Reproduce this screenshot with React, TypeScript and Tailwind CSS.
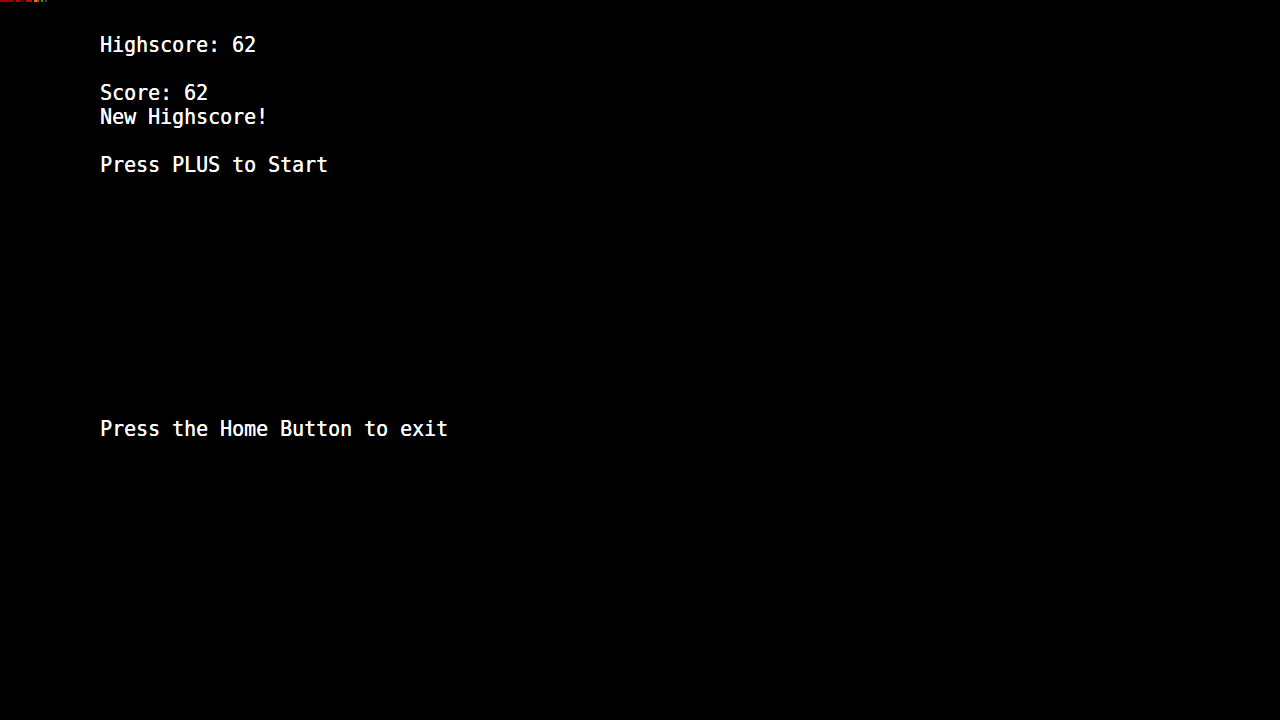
const lines = [
  "Highscore: 62",
  "",
  "Score: 62",
  "New Highscore!",
  "",
  "Press PLUS to Start",
  "",
  "",
  "",
  "",
  "",
  "",
  "",
  "",
  "",
  "",
  "Press the Home Button to exit",
];

const App = () => {
  return (
    <div className="relative w-[1280px] h-[720px] bg-black overflow-hidden">
      {/* debug strip in the corner */}
      <div className="absolute top-0 left-0 flex h-[2px]">
        <div className="w-[14px] bg-[#a00000]" />
        <div className="w-[2px] bg-black" />
        <div className="w-[4px] bg-[#c00000]" />
        <div className="w-[4px] bg-[#600000]" />
        <div className="w-[2px] bg-black" />
        <div className="w-[6px] bg-[#b01010]" />
        <div className="w-[2px] bg-black" />
        <div className="w-[3px] bg-[#d08020]" />
        <div className="w-[2px] bg-[#c04020]" />
        <div className="w-[2px] bg-black" />
        <div className="w-[2px] bg-[#20a020]" />
        <div className="w-[2px] bg-black" />
        <div className="w-[2px] bg-[#404040]" />
      </div>
      <div className="pt-[33px] pl-[100px]">
        <div className="origin-left scale-x-[0.906] font-['DejaVu_Sans_Mono',monospace] text-[22px] leading-[24px] font-normal text-white [text-shadow:0.4px_0_0_#fff]">
          {lines.map((l, i) => (
            <div key={i} className="h-[24px] whitespace-pre">
              {l}
            </div>
          ))}
        </div>
      </div>
    </div>
  );
};

export default App;
